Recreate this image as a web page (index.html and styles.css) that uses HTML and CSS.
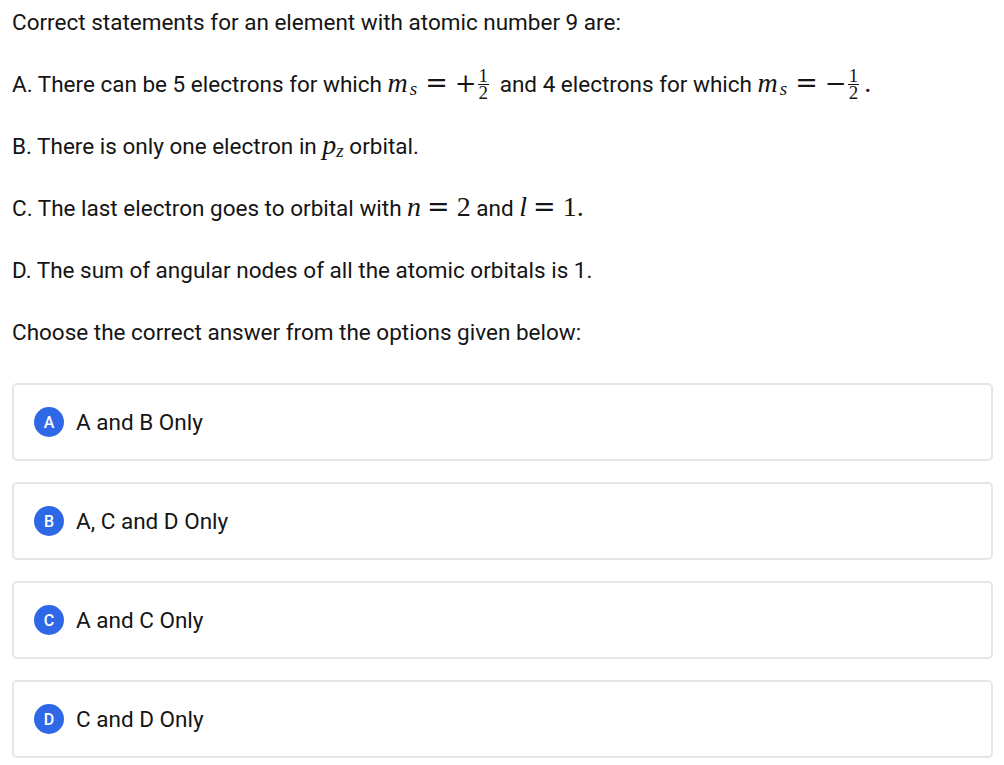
FILE: index.html
```html
<!DOCTYPE html>
<html>
<head>
<meta charset="utf-8">
<link rel="stylesheet" href="styles.css">
</head>
<body>
<div class="page">
  <div class="question">
    <p class="line">Correct statements for an element with atomic number 9 are:</p>
    <p class="line">A. There can be 5 electrons for which <span class="math"><i class="mi">m</i><sub class="sub">s</sub><span class="rel">=</span><span class="op">+</span><span class="frac"><span class="num">1</span><span class="den">2</span></span></span> and 4 electrons for which <span class="math"><i class="mi">m</i><sub class="sub">s</sub><span class="rel">=</span><span class="op">−</span><span class="frac"><span class="num">1</span><span class="den">2</span></span><span class="dot">.</span></span></p>
    <p class="line">B. There is only one electron in <span class="math"><i>p</i><sub class="sub">z</sub></span> orbital.</p>
    <p class="line">C. The last electron goes to orbital with <span class="math"><i>n</i><span class="rel rel-tight">=</span>2</span> and <span class="math"><i>l</i><span class="rel rel-tight">=</span>1.</span></p>
    <p class="line">D. The sum of angular nodes of all the atomic orbitals is 1.</p>
    <p class="line">Choose the correct answer from the options given below:</p>
  </div>
  <div class="options">
    <div class="option"><span class="badge">A</span><span class="opt-text">A and B Only</span></div>
    <div class="option"><span class="badge">B</span><span class="opt-text">A, C and D Only</span></div>
    <div class="option"><span class="badge">C</span><span class="opt-text">A and C Only</span></div>
    <div class="option"><span class="badge">D</span><span class="opt-text">C and D Only</span></div>
  </div>
</div>
</body>
</html>
```
FILE: styles.css
```css
html, body {
  margin: 0;
  padding: 0;
  background: #ffffff;
}
body {
  font-family: Roboto, "Liberation Sans", sans-serif;
  color: #151515;
}
.page {
  padding: 7px 11px 0 12px;
}
.question {
  display: flex;
  flex-direction: column;
  gap: 32px;
}
.line {
  margin: 0;
  font-size: 22.5px;
  line-height: 30px;
  height: 30px;
  white-space: nowrap;
}
.math {
  font-family: "Liberation Serif", "DejaVu Serif", serif;
  font-size: 28px;
  line-height: 0;
  white-space: nowrap;
}
.math i {
  font-style: italic;
}
.mi {
  letter-spacing: 2px;
}
.sub {
  font-style: italic;
  font-size: 19px;
  vertical-align: -3px;
  line-height: 0;
}
.rel {
  font-family: "DejaVu Serif", serif;
  font-size: 27px;
  margin: 0 7px 0 8px;
}
.rel-tight {
  margin: 0 7px 0 6px;
}
.op {
  font-family: "DejaVu Serif", serif;
  font-size: 26px;
}
.frac {
  display: inline-flex;
  flex-direction: column;
  align-items: center;
  vertical-align: 10px;
  font-size: 19px;
  line-height: 16px;
  margin: -8px 5px -8px 1px;
}
.num {
  padding: 0 1px;
  border-bottom: 1.5px solid #151515;
}
.dot {
  margin-left: 0;
}
.options {
  margin-top: 36px;
  display: flex;
  flex-direction: column;
  gap: 21px;
}
.option {
  height: 74px;
  border: 2px solid #e6e6ea;
  border-radius: 5px;
  display: flex;
  align-items: center;
  padding-left: 20px;
  gap: 12px;
}
.badge {
  width: 30px;
  height: 30px;
  border-radius: 50%;
  background: #2f68e6;
  color: #ffffff;
  font-size: 16px;
  font-weight: 500;
  display: flex;
  align-items: center;
  justify-content: center;
}
.opt-text {
  font-size: 22.5px;
  color: #151515;
}
```
